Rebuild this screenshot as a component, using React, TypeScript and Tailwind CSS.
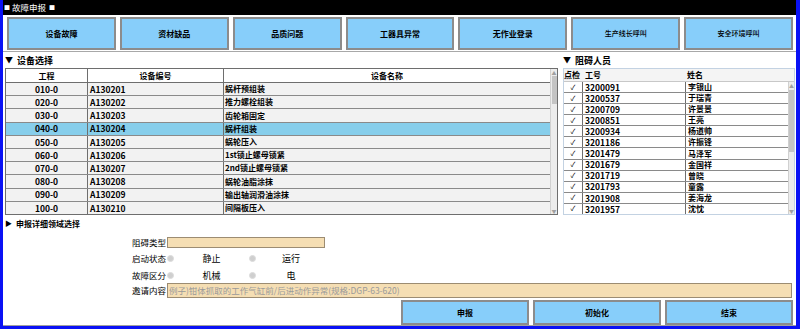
import React from "react";

const topButtons: { label: string; small?: boolean }[] = [
  { label: "设备故障" },
  { label: "资材缺品" },
  { label: "品质问题" },
  { label: "工器具异常" },
  { label: "无作业登录" },
  { label: "生产线长呼叫", small: true },
  { label: "安全环境呼叫", small: true },
];

const leftRows = [
  ["010-0", "A130201", "蜗杆预组装"],
  ["020-0", "A130202", "推力螺栓组装"],
  ["030-0", "A130203", "齿轮箱固定"],
  ["040-0", "A130204", "蜗杆组装"],
  ["050-0", "A130205", "蜗轮压入"],
  ["060-0", "A130206", "1st锁止螺母锁紧"],
  ["070-0", "A130207", "2nd锁止螺母锁紧"],
  ["080-0", "A130208", "蜗轮油脂涂抹"],
  ["090-0", "A130209", "输出轴润滑油涂抹"],
  ["100-0", "A130210", "间隔板压入"],
];

const rightRows = [
  ["3200091", "李银山"],
  ["3200537", "于瑞青"],
  ["3200709", "许景景"],
  ["3200851", "王亮"],
  ["3200934", "杨道帅"],
  ["3201186", "许振锋"],
  ["3201479", "马泽军"],
  ["3201679", "金国祥"],
  ["3201719", "曾晓"],
  ["3201793", "童露"],
  ["3201908", "姜海龙"],
  ["3201957", "沈忱"],
];

function Radio() {
  return <div className="w-[7px] h-[7px] rounded-full bg-[#cfcfcf] border border-[#dcdcdc]" />;
}

export default function App() {
  return (
    <div className="w-[800px] h-[329px] overflow-hidden bg-white border-l-[3px] border-r-[4px] border-b-[3px] border-[#0a12f5] flex flex-col font-['Noto_Sans_CJK_SC','Noto_Sans',sans-serif] text-black">
      {/* title bar */}
      <div className="h-[15px] bg-black text-white flex items-center text-[8.5px] leading-none shrink-0">
        <span className="text-[6px] ml-[1px]">■</span>
        <span className="ml-[2px]">故障申报</span>
        <span className="text-[6px] ml-[3px]">■</span>
      </div>

      {/* top buttons */}
      <div className="mt-[2px] h-[33px] flex gap-[4px] pl-[4px] pr-[3px] shrink-0">
        {topButtons.map((b) => (
          <div
            key={b.label}
            className={`flex-1 bg-[#87cefa] border-2 border-[#8c8c8c] flex items-center justify-center leading-none ${
              b.small ? "text-[7px] font-medium" : "text-[8px] font-bold"
            }`}
          >
            {b.label}
          </div>
        ))}
      </div>
      <div className="mt-[1px] border-b border-[#a8a8a8] shrink-0" />

      {/* main tables */}
      <div className="flex pl-[2px] pr-[1px] gap-[5px] shrink-0">
        {/* left */}
        <div className="w-[553px] flex flex-col">
          <div className="h-[16px] flex items-center text-[9px] font-bold leading-none">
            <span className="text-[8px] mr-[4px]">▼</span>设备选择
          </div>
          <div className="h-[147px] border border-[#6e6e6e] flex">
            <div className="flex-1 flex flex-col">
              <div className="h-[14px] bg-white border-b border-[#6e6e6e] flex text-[8px] font-bold leading-none shrink-0">
                <div className="w-[82px] border-r border-[#6e6e6e] flex items-center justify-center">工程</div>
                <div className="w-[136px] border-r border-[#6e6e6e] flex items-center justify-center">设备编号</div>
                <div className="flex-1 flex items-center justify-center">设备名称</div>
              </div>
              <div className="flex-1 flex flex-col">
                {leftRows.map((r, i) => (
                  <div
                    key={r[0]}
                    className={`flex-1 flex border-b border-[#8a8a8a] leading-none ${
                      i === 3 ? "bg-[#87ceeb]" : "bg-[#f2f2f2]"
                    } ${i === leftRows.length - 1 ? "border-b-0" : ""}`}
                  >
                    <div className="w-[82px] border-r border-[#6e6e6e] flex items-center justify-center text-[8.5px] font-semibold">
                      {r[0]}
                    </div>
                    <div className="w-[136px] border-r border-[#6e6e6e] flex items-center pl-[2px] text-[8.5px] font-semibold">
                      {r[1]}
                    </div>
                    <div className="flex-1 flex items-center pl-[1px] text-[8px] font-bold whitespace-nowrap">{r[2]}</div>
                  </div>
                ))}
              </div>
            </div>
            {/* scrollbar */}
            <div className="w-[7px] bg-[#ececec] border-l border-[#d0d0d0] flex flex-col items-center">
              <div className="text-[5px] text-[#a0a0a0] leading-none mt-[1px]">▲</div>
              <div className="w-[5px] h-[28px] bg-[#c4c4c4] mt-[1px]" />
              <div className="flex-1" />
              <div className="text-[5px] text-[#a0a0a0] leading-none mb-[1px]">▼</div>
            </div>
          </div>
        </div>

        {/* right */}
        <div className="flex-1 flex flex-col">
          <div className="h-[16px] flex items-center text-[9px] font-bold leading-none">
            <span className="text-[8px] mr-[4px]">▼</span>阻碍人员
          </div>
          <div className="h-[147px] border border-[#c3d2e2] flex flex-col">
            <div className="h-[13px] bg-[#f4f4f4] border-b border-[#c8c8c8] flex text-[8px] font-bold leading-none shrink-0">
              <div className="w-[19px] flex items-center">点检</div>
              <div className="w-[103px] flex items-center pl-[2px]">工号</div>
              <div className="flex-1 flex items-center pl-[1px]">姓名</div>
            </div>
            <div className="flex-1 flex">
              <div className="flex-1 flex flex-col">
                {rightRows.map((r, i) => (
                  <div
                    key={r[0]}
                    className={`flex-1 flex bg-white leading-none ${
                      i === rightRows.length - 1 ? "" : "border-b border-[#8a8a8a]"
                    }`}
                  >
                    <div className="w-[19px] border-r border-[#6e6e6e] flex items-center justify-center text-[7px]">✓</div>
                    <div className="w-[103px] border-r border-[#6e6e6e] flex items-center pl-[2px] text-[8.5px] font-semibold">
                      {r[0]}
                    </div>
                    <div className="flex-1 flex items-center pl-[2px] text-[8px] font-bold">{r[1]}</div>
                  </div>
                ))}
              </div>
              <div className="w-[6px] bg-[#ececec] border-l border-[#d0d0d0] flex flex-col items-center">
                <div className="text-[5px] text-[#a0a0a0] leading-none mt-[1px]">▲</div>
                <div className="w-[5px] h-[62px] bg-[#c4c4c4] mt-[2px]" />
                <div className="flex-1" />
                <div className="text-[5px] text-[#a0a0a0] leading-none mb-[1px]">▼</div>
              </div>
            </div>
          </div>
        </div>
      </div>

      {/* detail section */}
      <div className="mt-[2px] h-[13px] pl-[2px] flex items-center text-[8px] font-bold leading-none shrink-0">
        <span className="text-[7px] mr-[4px]">▶</span>申报详细领域选择
      </div>

      <div className="mt-[7px] h-[11px] flex items-center text-[8.5px] leading-none shrink-0">
        <div className="w-[163px] text-right">阻碍类型</div>
        <div className="ml-[1px] w-[158px] h-[11px] bg-[#f5deb3] border border-[#9c8c72]" />
      </div>

      <div className="mt-[4px] h-[12px] flex items-center text-[8.5px] leading-none shrink-0">
        <div className="w-[163px] text-right">启动状态</div>
        <div className="ml-[1px]"><Radio /></div>
        <div className="w-[75px] text-center text-[9px]">静止</div>
        <Radio />
        <div className="w-[70px] text-center text-[9px]">运行</div>
      </div>

      <div className="mt-[5px] h-[12px] flex items-center text-[8.5px] leading-none shrink-0">
        <div className="w-[163px] text-right">故障区分</div>
        <div className="ml-[1px]"><Radio /></div>
        <div className="w-[75px] text-center text-[9px]">机械</div>
        <Radio />
        <div className="w-[70px] text-center text-[9px]">电</div>
      </div>

      <div className="mt-[2px] h-[15px] flex items-center text-[8.5px] leading-none shrink-0">
        <div className="w-[163px] text-right">邀请内容</div>
        <div className="ml-[1px] w-[625px] h-[15px] bg-[#f5deb3] border border-[#9c8c72] flex items-center pl-[1px] text-[#9a9a9a] text-[8.5px] whitespace-nowrap">
          例子)钳体抓取的工作气缸前/后进动作异常(规格:DGP-63-620)
        </div>
      </div>

      <div className="mt-[2px] h-[25px] flex justify-end gap-[4px] pr-[3px] shrink-0">
        {["申报", "初始化", "结束"].map((t) => (
          <div
            key={t}
            className="w-[128px] bg-[#87cefa] border-2 border-[#8c8c8c] flex items-center justify-center text-[8px] font-bold leading-none"
          >
            {t}
          </div>
        ))}
      </div>
      <div className="flex-1 border-b border-[#a0a0a0]" />
    </div>
  );
}
